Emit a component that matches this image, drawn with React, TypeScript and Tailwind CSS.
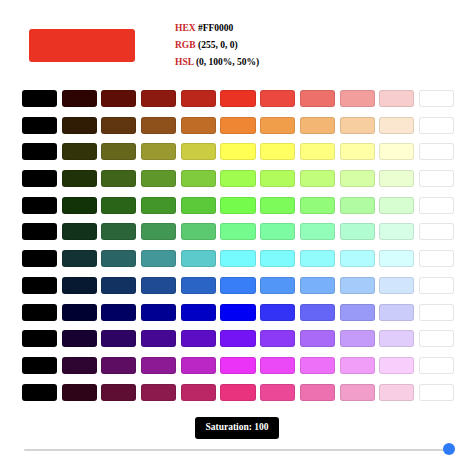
import React from 'react';

// the shot was taken on a wide-gamut screen, so sRGB values show shifted:
// map each sRGB colour through display-p3 to get what the picture shows
const toLinear = (c: number) => (c <= 0.04045 ? c / 12.92 : Math.pow((c + 0.055) / 1.055, 2.4));
const toGamma = (c: number) => (c <= 0.0031308 ? c * 12.92 : 1.055 * Math.pow(c, 1 / 2.4) - 0.055);

const hslToRgb = (h: number, s: number, l: number): [number, number, number] => {
  s /= 100;
  l /= 100;
  const k = (n: number) => (n + h / 30) % 12;
  const a = s * Math.min(l, 1 - l);
  const f = (n: number) => l - a * Math.max(-1, Math.min(k(n) - 3, Math.min(9 - k(n), 1)));
  return [f(0), f(8), f(4)];
};

const shown = (h: number, s: number, l: number) => {
  const [r, g, b] = hslToRgb(h, s, l).map(toLinear);
  const p = [
    0.8225 * r + 0.1774 * g,
    0.0332 * r + 0.9669 * g,
    0.0171 * r + 0.0724 * g + 0.9108 * b,
  ].map((v) => Math.round(Math.min(1, Math.max(0, toGamma(v))) * 255));
  return `rgb(${p[0]}, ${p[1]}, ${p[2]})`;
};

const hues = [0, 30, 60, 90, 120, 150, 180, 210, 240, 270, 300, 330];
const lightness = [0, 10, 20, 30, 40, 50, 60, 70, 80, 90, 100];
const saturation = 100;

const serif = "font-['Liberation_Serif',serif]";

const App: React.FC = () => {
  return (
    <div className={`w-[474px] h-[472px] bg-white flex flex-col ${serif}`}>
      {/* Selected colour */}
      <div className="h-[62px] flex items-start pt-[20px] pl-[29px]">
        <div
          className="mt-[9px] w-[106px] h-[33px] rounded-[3px]"
          style={{ backgroundColor: shown(0, 100, 50) }}
        />
        <div className="ml-[40px] flex flex-col text-[9.5px] leading-[17px] font-bold text-black">
          <p>
            <span className="text-[#c8282b]">HEX</span> #FF0000
          </p>
          <p>
            <span className="text-[#c8282b]">RGB</span> (255, 0, 0)
          </p>
          <p>
            <span className="text-[#c8282b]">HSL</span> (0, 100%, 50%)
          </p>
        </div>
      </div>

      {/* Palette */}
      <div className="mt-[28px] ml-[22px] w-[432px] grid grid-cols-11 gap-x-[4.7px] gap-y-[9.7px]">
        {hues.map((h) =>
          lightness.map((l) => (
            <div
              key={`${h}-${l}`}
              className="h-[17px] rounded-[3px] border border-black/10"
              style={{ backgroundColor: shown(h, saturation, l) }}
            />
          ))
        )}
      </div>

      {/* Saturation */}
      <div className="mt-[16px] flex justify-center">
        <div className="w-[84px] h-[22px] rounded-[3px] bg-black text-white text-[9.5px] font-bold flex items-center justify-center">
          Saturation: {saturation}
        </div>
      </div>

      <div className="relative mt-[4px] ml-[24px] w-[431px] h-[12px] flex items-center">
        <div className="w-full h-[2px] bg-[#d4d4d4] rounded-full mt-[3px]" />
        <div className="absolute right-0 top-0 w-[12px] h-[12px] rounded-full bg-[#2f7bf5]" />
      </div>
    </div>
  );
};

export default App;
